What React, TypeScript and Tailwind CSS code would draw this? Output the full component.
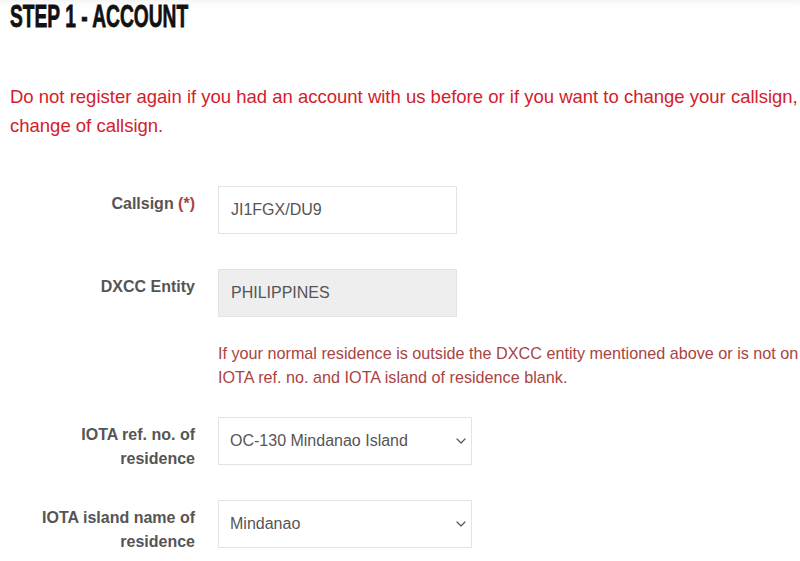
import type { ReactNode } from "react";

const sans = { fontFamily: '"Liberation Sans", Arial, sans-serif' };

function Row({ label, children }: { label: ReactNode; children: ReactNode }) {
  return (
    <div className="flex items-start">
      <label className="w-[195px] shrink-0 text-right pt-[6px] text-[16px] leading-[24px] font-bold text-[#555]">
        {label}
      </label>
      <div className="ml-[23px]">{children}</div>
    </div>
  );
}

function Chevron() {
  return (
    <svg
      className="pointer-events-none absolute right-[6px] top-1/2 -translate-y-1/2"
      width="10"
      height="6"
      viewBox="0 0 10 6"
      fill="none"
      stroke="#555"
      strokeWidth="1.2"
      strokeLinecap="round"
      strokeLinejoin="round"
    >
      <path d="M1 1l4 4 4-4" />
    </svg>
  );
}

function Select({ value }: { value: string }) {
  return (
    <div className="relative w-[254px]">
      <select
        defaultValue={value}
        className="appearance-none w-full h-[48px] border border-[#e3e3e3] bg-white pl-[11px] pr-8 text-[16px] text-[#555] outline-none"
        style={sans}
      >
        <option value={value}>{value}</option>
      </select>
      <Chevron />
    </div>
  );
}

export default function App() {
  return (
    <div
      className="relative w-full h-[561px] overflow-hidden bg-white shadow-[inset_0_6px_6px_-4px_rgba(0,0,0,0.06)]"
      style={sans}
    >
      <h1 className="pl-[10px] h-[32px] w-[200px] text-[32px] leading-[32px] font-bold text-[#111] whitespace-nowrap">
        <span className="inline-block origin-left scale-x-[0.6] [-webkit-text-stroke:0.8px_#111]">
          STEP 1 - ACCOUNT
        </span>
      </h1>

      <p className="mt-[50px] pl-[10px] text-[18.5px] leading-[29px] text-[#d4202a] whitespace-nowrap">
        Do not register again if you had an account with us before or if you want to change your callsign,
        <br />
        change of callsign.
      </p>

      <form className="mt-[46px] flex flex-col">
        <Row
          label={
            <>
              Callsign <span className="text-[#a94442]">(*)</span>
            </>
          }
        >
          <input
            readOnly
            value="JI1FGX/DU9"
            className="w-[239px] h-[48px] border border-[#e3e3e3] bg-white px-3 text-[16px] text-[#555] outline-none"
            style={sans}
          />
        </Row>

        <div className="mt-[35px]">
          <Row label="DXCC Entity">
            <input
              readOnly
              value="PHILIPPINES"
              className="w-[239px] h-[48px] border border-[#e3e3e3] bg-[#eeeeee] px-3 text-[16px] text-[#555] outline-none"
              style={sans}
            />
          </Row>
        </div>

        <p className="mt-[24px] pl-[218px] text-[16.2px] leading-[24px] text-[#a94442] whitespace-nowrap">
          If your normal residence is outside the DXCC entity mentioned above or is not on
          <br />
          IOTA ref. no. and IOTA island of residence blank.
        </p>

        <div className="mt-[28px]">
          <Row
            label={
              <>
                IOTA ref. no. of
                <br />
                residence
              </>
            }
          >
            <Select value="OC-130 Mindanao Island" />
          </Row>
        </div>

        <div className="mt-[29px]">
          <Row
            label={
              <>
                IOTA island name of
                <br />
                residence
              </>
            }
          >
            <Select value="Mindanao" />
          </Row>
        </div>
      </form>
    </div>
  );
}
